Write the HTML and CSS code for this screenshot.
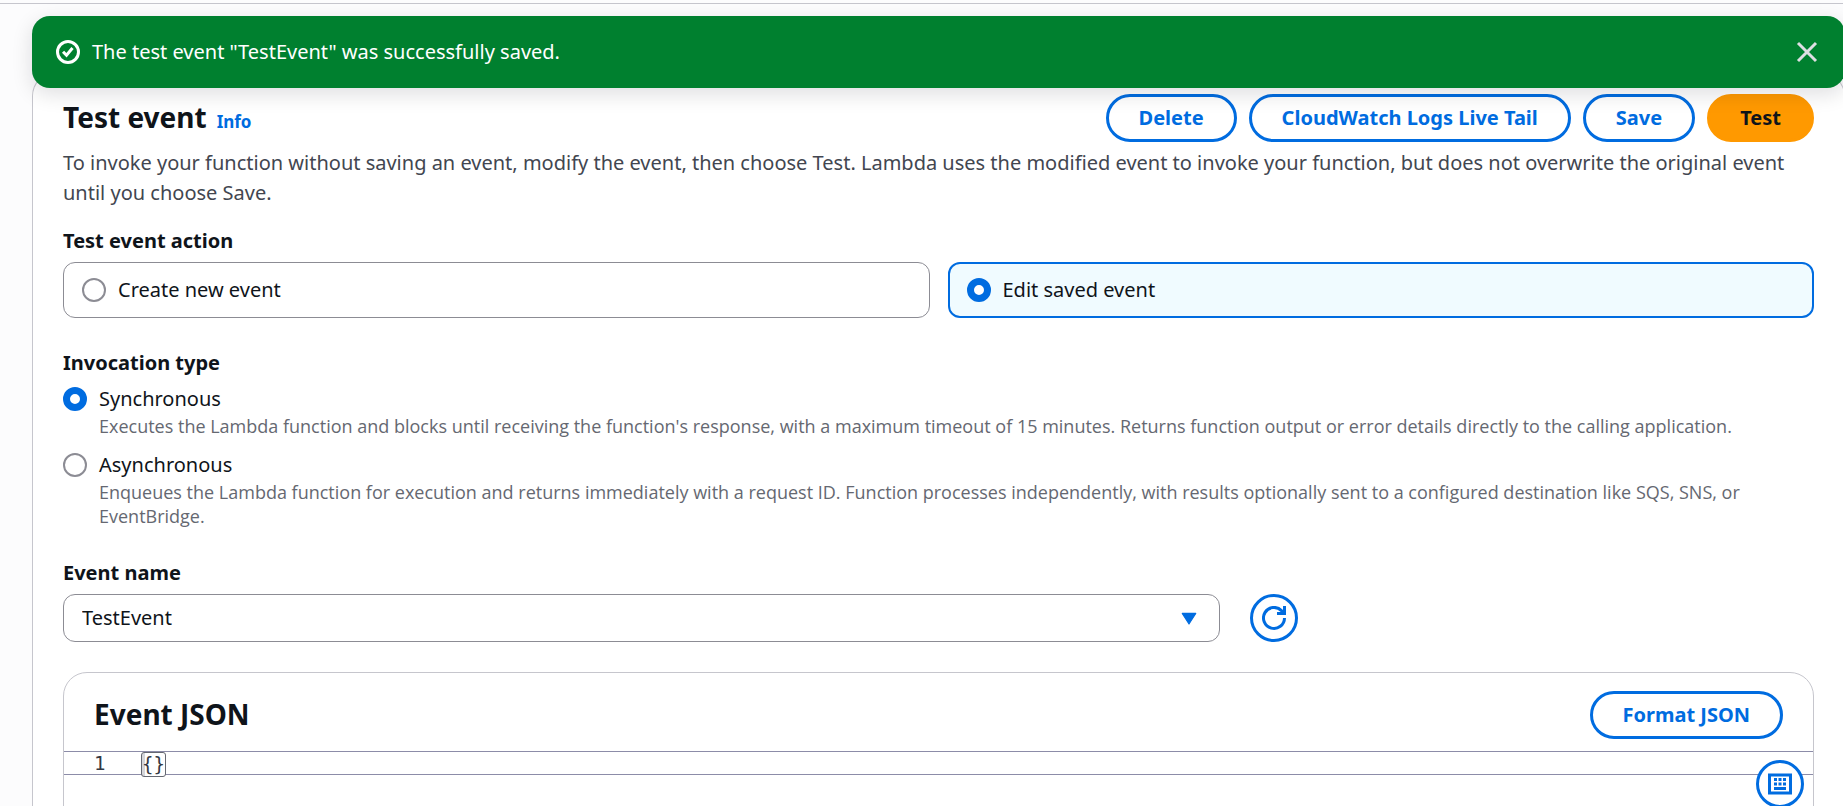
FILE: index.html
```html
<!DOCTYPE html>
<html lang="en">
<head>
<meta charset="utf-8">
<title>Test event</title>
<link rel="stylesheet" href="styles.css">
</head>
<body>
<div class="flash" role="status">
  <svg class="flash-icon" viewBox="0 0 16 16" aria-hidden="true"><circle cx="8" cy="8" r="7"/><path d="m4.700 7.800 2.300 2.400 4-4.900"/></svg>
  <p class="flash-text">The test event "TestEvent" was successfully saved.</p>
  <button class="flash-close" type="button" aria-label="Dismiss"><svg viewBox="0 0 16 16" aria-hidden="true"><path d="m2 2 12 12M14 2 2 14"/></svg></button>
</div>
<main class="panel">
  <header class="panel-header">
    <h2 class="title">Test event</h2>
    <a class="info" href="#info">Info</a>
    <div class="actions">
      <button class="btn" type="button">Delete</button>
      <button class="btn" type="button">CloudWatch Logs Live Tail</button>
      <button class="btn" type="button">Save</button>
      <button class="btn btn-primary" type="button">Test</button>
    </div>
  </header>
  <p class="description">To invoke your function without saving an event, modify the event, then choose Test. Lambda uses the modified event to invoke your function, but does not overwrite the original event until you choose Save.</p>

  <fieldset class="field">
    <legend class="label">Test event action</legend>
    <div class="tiles">
      <label class="tile"><input class="radio" type="radio" name="action">Create new event</label>
      <label class="tile tile-selected"><input class="radio" type="radio" name="action" checked>Edit saved event</label>
    </div>
  </fieldset>

  <fieldset class="field">
    <legend class="label">Invocation type</legend>
    <div class="option">
      <input class="radio" type="radio" name="invocation" id="sync" aria-describedby="sync-hint" checked>
      <div>
        <label class="option-label" for="sync">Synchronous</label>
        <p class="hint" id="sync-hint">Executes the Lambda function and blocks until receiving the function's response, with a maximum timeout of 15 minutes. Returns function output or error details directly to the calling application.</p>
      </div>
    </div>
    <div class="option">
      <input class="radio" type="radio" name="invocation" id="async" aria-describedby="async-hint">
      <div>
        <label class="option-label" for="async">Asynchronous</label>
        <p class="hint" id="async-hint">Enqueues the Lambda function for execution and returns immediately with a request ID. Function processes independently, with results optionally sent to a configured destination like SQS, SNS, or<br>EventBridge.</p>
      </div>
    </div>
  </fieldset>

  <div class="field">
    <label class="label" for="event-name">Event name</label>
    <div class="name-row">
      <div class="select-wrap">
        <select class="select" id="event-name"><option>TestEvent</option></select>
        <svg class="caret" viewBox="0 0 16 12" aria-hidden="true"><path d="M2 1h12L8 10.500z"/></svg>
      </div>
      <button class="icon-btn" type="button" aria-label="Refresh"><svg viewBox="0 0 24 24" aria-hidden="true"><path d="M22.500 12A10.500 10.500 0 1 1 19.500 4.600L22.500 7.500"/><path d="M22.500 0v7.500H15"/></svg></button>
    </div>
  </div>

  <section class="json">
    <header class="json-header">
      <h2 class="title">Event JSON</h2>
      <button class="btn" type="button">Format JSON</button>
    </header>
    <div class="editor">
      <div class="code-line"><span class="line-no">1</span><code class="code">{}</code></div>
      <button class="icon-btn shortcuts" type="button" aria-label="Keyboard shortcuts"><svg viewBox="0 0 24 24" aria-hidden="true"><path d="M1.500 3h21v18h-21z"/><path stroke-dasharray="3 1.500" d="M6 7.500h12M6 12h12"/><path d="M6 16.500h12"/></svg></button>
    </div>
  </section>
</main>
</body>
</html>
```
FILE: styles.css
```css
* { box-sizing: border-box; }

body {
  display: flex;
  flex-direction: column;
  height: 100vh;
  margin: 0;
  padding: 16px 0 0 32px;
  overflow: hidden;
  background: linear-gradient(#c6c6cd, #c6c6cd) 0 3px / 100% 1px no-repeat #fcfcfd;
  color: #0f141a;
  font: 20px/30px "Noto Sans", sans-serif;
}

h2, p { margin: 0; }
button, select, input { font: inherit; margin: 0; }
svg { fill: none; stroke: currentColor; }

.flash {
  position: relative;
  z-index: 1;
  flex: none;
  display: flex;
  align-items: center;
  gap: 12px;
  height: 72px;
  margin-right: -2px;
  padding: 0 24px;
  border-radius: 18px;
  background: #00802f;
  color: #fff;
  box-shadow: 0 6px 20px 1px rgba(0, 7, 22, 0.12);
}
.flash-icon { width: 24px; height: 24px; stroke-width: 2; }
.flash-text { flex: 1; }
.flash-close {
  display: flex;
  padding: 2px;
  border: 0;
  background: none;
  color: #dedee3;
}
.flash-close svg { width: 24px; height: 24px; stroke-width: 2; }

.panel {
  flex: 1;
  margin: -16px -2px 0 0;
  padding: 21px 30px 0;
  border: 1px solid #c6c6cd;
  border-bottom: 0;
  border-radius: 24px 24px 0 0;
  background: #fff;
}
.panel-header { display: flex; align-items: center; gap: 10px; }
.title { padding-bottom: 2px; font-size: 28px; line-height: 36px; font-weight: 700; }
.info { padding-top: 8px; font-size: 17px; font-weight: 700; color: #006ce0; text-decoration: none; }
.actions { display: flex; gap: 12px; margin-left: auto; }

.btn {
  height: 48px;
  padding: 0 30px;
  border: 3px solid #006ce0;
  border-radius: 30px;
  background: #fff;
  color: #006ce0;
  font-weight: 700;
  white-space: nowrap;
}
.btn-primary { border-color: #f90; background: #f90; color: #0f141a; }

.description { padding-top: 6px; color: #424650; }

.field { min-width: 0; margin: 18px 0 0; padding: 0; border: 0; }
.field + .field { margin-top: 30px; }
.label { display: block; padding: 0; margin-bottom: 6px; font-weight: 700; }

.tiles { display: grid; grid-template-columns: 1fr 1fr; gap: 18px; }
.tile {
  display: flex;
  align-items: center;
  gap: 12px;
  height: 56px;
  padding: 0 18px;
  border: 1px solid #8c8c94;
  border-radius: 12px;
}
.tile-selected { padding: 0 17px; border: 2px solid #006ce0; background: #f0fbff; }

.radio {
  appearance: none;
  flex: none;
  width: 24px;
  height: 24px;
  border: 2px solid #8c8c94;
  border-radius: 50%;
  background: #fff;
}
.radio:checked { border: 7px solid #006ce0; }

.option { display: flex; gap: 12px; }
.option + .option { margin-top: 12px; }
.option .radio { margin-top: 3px; }
.option-label { display: block; }
.hint { font-family: "Open Sans", "Noto Sans", sans-serif; font-size: 18px; line-height: 24px; color: #656871; }

.name-row { display: grid; grid-template-columns: repeat(3, 1fr); gap: 30px; }
.select-wrap { position: relative; grid-column: span 2; }
.select {
  appearance: none;
  width: 100%;
  height: 48px;
  padding: 0 18px;
  border: 1px solid #8c8c94;
  border-radius: 12px;
  background: #fff;
  color: inherit;
}
.caret { position: absolute; top: 18px; right: 22px; width: 18px; height: 14px; fill: #006ce0; stroke: #006ce0; stroke-linejoin: round; }
.icon-btn {
  display: flex;
  align-items: center;
  justify-content: center;
  width: 48px;
  height: 48px;
  padding: 0;
  border: 3px solid #006ce0;
  border-radius: 50%;
  background: #fff;
  color: #006ce0;
}
.icon-btn svg { width: 24px; height: 24px; stroke-width: 3; }

.json {
  margin-top: 30px;
  padding-bottom: 90px;
  border: 1px solid #c6c6cd;
  border-radius: 24px;
}
.json-header {
  display: flex;
  align-items: center;
  justify-content: space-between;
  padding: 18px 30px 12px;
}
.editor { position: relative; font-family: "DejaVu Sans Mono", monospace; font-size: 19px; line-height: 23px; color: #333843; }
.code-line { display: flex; height: 24px; border: solid #8c8ca8; border-width: 1px 0; }
.line-no { width: 77px; padding-left: 30px; }
.code { font: inherit; height: 25px; border: 1px solid #656871; border-radius: 3px; background: linear-gradient(90deg, #d5d6da 3px, #fff 3px); }
.shortcuts { position: absolute; top: 9px; right: 9px; }
```
